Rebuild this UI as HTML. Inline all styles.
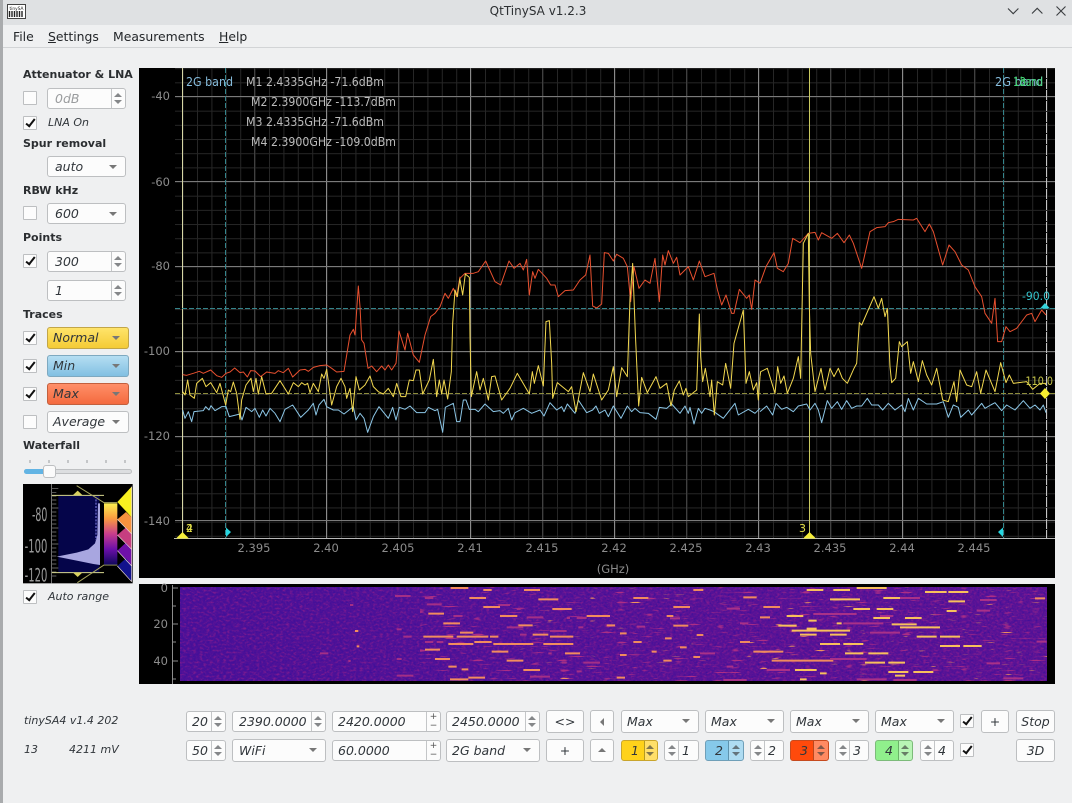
<!DOCTYPE html>
<html><head><meta charset="utf-8"><title>QtTinySA v1.2.3</title>
<style>
html,body{margin:0;padding:0;width:1072px;height:803px;overflow:hidden;background:#eff0f1;font-family:"DejaVu Sans",sans-serif;color:#232629}
.a{position:absolute;white-space:nowrap}
.b{position:absolute;white-space:nowrap;font-weight:bold;font-size:11px;left:23px;color:#2b2e31;line-height:14px}
.t{position:absolute;white-space:nowrap;font-style:italic;font-size:11px;line-height:14px;color:#31363b}
.w{position:absolute;box-sizing:border-box;background:#fcfcfc;border:1px solid #bdbfc1;border-radius:3px;font-style:italic;font-size:12.5px;color:#31363b;padding-left:7px;white-space:nowrap;height:21px;line-height:19px}
.c:after{content:"";position:absolute;right:8px;top:8px;border-left:4px solid transparent;border-right:4px solid transparent;border-top:4px solid #777}
.s{background:linear-gradient(#c4c6c8,#c4c6c8) right 13px top 0/1px 100% no-repeat,#fcfcfc}
.s:before{content:"";position:absolute;right:3px;top:4px;border-left:4px solid transparent;border-right:4px solid transparent;border-bottom:4px solid #858789}
.s:after{content:"";position:absolute;right:3px;bottom:4px;border-left:4px solid transparent;border-right:4px solid transparent;border-top:4px solid #858789}
.p{position:absolute;box-sizing:border-box;background:#fcfcfc;border:1px solid #bdbfc1;border-radius:3px;font-style:italic;font-size:12.5px;color:#31363b;text-align:center;height:23px;line-height:21px}
.k{position:absolute;box-sizing:border-box;width:14px;height:14px;background:#fcfcfc;border:1px solid #bdbfc1;border-radius:1px}
.k.on:after{content:"";position:absolute;left:4px;top:0px;width:3px;height:8px;border:solid #111;border-width:0 2px 2px 0;transform:rotate(38deg)}
.pm{background:linear-gradient(#c4c6c8,#c4c6c8) right 13px top 0/1px 100% no-repeat,#fcfcfc}
.pm b{position:absolute;right:2px;font:normal 9px/9px "DejaVu Sans",sans-serif;width:9px;text-align:center;color:#555}
.mk{background-position:left 13px top 0}
.mk:before,.mk:after{right:auto;left:3px}
.y{position:absolute;box-sizing:border-box;border-radius:3px;height:21px;top:740px;font-style:italic;font-size:12.5px;line-height:19px;padding-left:9px;color:#31363b}
.y:before{content:"";position:absolute;right:3px;top:4px;border-left:4px solid transparent;border-right:4px solid transparent;border-bottom:4px solid rgba(60,60,60,.65)}
.y:after{content:"";position:absolute;right:3px;bottom:4px;border-left:4px solid transparent;border-right:4px solid transparent;border-top:4px solid rgba(60,60,60,.65)}
svg{position:absolute;left:0;top:0}
text{font-family:"DejaVu Sans",sans-serif}
</style></head><body>
<div class="a" style="left:0;top:0;width:1072px;height:25px;background:#dfe1e3"></div>
<div class="a" style="left:0;top:25px;width:1072px;height:22px;background:#eff0f1;border-bottom:1px solid #d2d4d6"></div>
<div class="a" style="left:2px;top:0;width:1072px;height:25px;text-align:center;font-size:12px;line-height:22px;color:#2c2f32">QtTinySA v1.2.3</div>
<div class="a" style="left:13px;top:28px;font-size:12.4px;line-height:17px">File</div>
<div class="a" style="left:48px;top:28px;font-size:12.4px;line-height:17px"><u>S</u>ettings</div>
<div class="a" style="left:113px;top:28px;font-size:12.4px;line-height:17px">Measurements</div>
<div class="a" style="left:219px;top:28px;font-size:12.4px;line-height:17px"><u>H</u>elp</div>
<div class="a" style="left:0;top:0;width:3px;height:803px;background:#a9abad"></div>

<div class="a" style="left:139px;top:68px;width:916px;height:510px;background:#000"></div>
<div class="a" style="left:139px;top:584px;width:916px;height:100px;background:#000"></div>

<div class="b" style="top:68px">Attenuator &amp; LNA</div>
<div class="k" style="left:23px;top:91px"></div>
<div class="w s" style="left:47px;top:88px;width:79px;color:#9a9c9e">0dB</div>
<div class="k on" style="left:23px;top:116px"></div>
<div class="t" style="left:48px;top:116px">LNA On</div>
<div class="b" style="top:137px">Spur removal</div>
<div class="w c" style="left:47px;top:156px;width:79px">auto</div>
<div class="b" style="top:184px">RBW kHz</div>
<div class="k" style="left:23px;top:206px"></div>
<div class="w c" style="left:47px;top:203px;width:79px">600</div>
<div class="b" style="top:231px">Points</div>
<div class="k on" style="left:23px;top:254px"></div>
<div class="w s" style="left:47px;top:251px;width:79px">300</div>
<div class="w s" style="left:47px;top:280px;width:79px">1</div>
<div class="b" style="top:308px">Traces</div>
<div class="k on" style="left:23px;top:331px"></div>
<div class="w c" style="left:47px;top:327px;width:82px;height:22px;padding-left:5px;background:linear-gradient(#ffe46a,#f4cb36);border-color:#c2a648">Normal</div>
<div class="k on" style="left:23px;top:359px"></div>
<div class="w c" style="left:47px;top:355px;width:82px;height:22px;padding-left:5px;background:linear-gradient(#b5def2,#82c0e2);border-color:#7ea9c0">Min</div>
<div class="k on" style="left:23px;top:387px"></div>
<div class="w c" style="left:47px;top:383px;width:82px;height:22px;padding-left:5px;background:linear-gradient(#ff8f68,#f46a3f);border-color:#c2603e">Max</div>
<div class="k" style="left:23px;top:415px"></div>
<div class="w c" style="left:47px;top:411px;width:82px;height:22px;padding-left:5px">Average</div>
<div class="b" style="top:439px">Waterfall</div>
<div class="a" style="left:24px;top:469px;width:108px;height:5px;box-sizing:border-box;background:#dcdee0;border:1px solid #bdbfc1;border-radius:3px"></div>
<div class="a" style="left:24px;top:469px;width:22px;height:5px;background:#62b4e4;border-radius:3px 0 0 3px"></div>
<div class="a" style="left:43px;top:465px;width:13px;height:13px;box-sizing:border-box;background:#fbfbfb;border:1px solid #bdbfc1;border-radius:3px"></div>
<div class="k on" style="left:23px;top:590px"></div>
<div class="t" style="left:48px;top:590px">Auto range</div>

<div class="t" style="left:24px;top:714px">tinySA4 v1.4 202</div>
<div class="t" style="left:24px;top:743px">13</div>
<div class="t" style="left:69px;top:743px">4211 mV</div>

<div class="w s" style="left:186px;top:711px;width:40px;padding-left:5px">20</div>
<div class="w s" style="left:186px;top:740px;width:40px;padding-left:5px">50</div>
<div class="w s" style="left:232px;top:711px;width:94px;padding-left:6px">2390.0000</div>
<div class="w c" style="left:232px;top:739px;width:94px;height:23px;line-height:21px;padding-left:6px">WiFi</div>
<div class="w pm" style="left:332px;top:711px;width:109px;padding-left:5px">2420.0000<b style="top:1px">+</b><b style="top:10px">−</b></div>
<div class="w pm" style="left:332px;top:740px;width:109px;padding-left:5px">60.0000<b style="top:1px">+</b><b style="top:10px">−</b></div>
<div class="w s" style="left:446px;top:711px;width:94px;padding-left:5px">2450.0000</div>
<div class="w c" style="left:446px;top:739px;width:94px;height:23px;line-height:21px;padding-left:5px">2G band</div>

<div class="p" style="left:546px;top:710px;width:38px;font-style:normal">&lt;&gt;</div>
<div class="p" style="left:546px;top:739px;width:38px;font-style:normal">+</div>
<div class="p" style="left:590px;top:710px;width:24px"></div>
<div class="a" style="left:600px;top:718px;border-top:4px solid transparent;border-bottom:4px solid transparent;border-right:4px solid #777"></div>
<div class="p" style="left:590px;top:739px;width:24px"></div>
<div class="a" style="left:598px;top:748px;border-left:4px solid transparent;border-right:4px solid transparent;border-bottom:4px solid #777"></div>
<div class="w c" style="left:621px;top:710px;width:78px;height:23px;line-height:21px;padding-left:5px">Max</div>
<div class="w c" style="left:705px;top:710px;width:79px;height:23px;line-height:21px;padding-left:5px">Max</div>
<div class="w c" style="left:790px;top:710px;width:79px;height:23px;line-height:21px;padding-left:5px">Max</div>
<div class="w c" style="left:875px;top:710px;width:79px;height:23px;line-height:21px;padding-left:5px">Max</div>
<div class="k on" style="left:960px;top:714px"></div>
<div class="k on" style="left:960px;top:743px"></div>
<div class="p" style="left:981px;top:710px;width:28px;font-style:normal">+</div>
<div class="p" style="left:1016px;top:710px;width:39px">Stop</div>
<div class="p" style="left:1016px;top:739px;width:39px">3D</div>

<div class="y" style="left:621px;width:37px;background:linear-gradient(90deg,#ffd21a 0,#ffd21a 22px,#b59a20 22px,#b59a20 23px,#ffdf6a 23px);border:1px solid #c9a52c">1</div>
<div class="w s mk" style="left:664px;top:740px;width:35px;padding-left:17px">1</div>
<div class="y" style="left:705px;width:39px;background:linear-gradient(90deg,#86c9ea 0,#86c9ea 22px,#5e93ad 22px,#5e93ad 23px,#aedcf2 23px);border:1px solid #6f9fb8">2</div>
<div class="w s mk" style="left:750px;top:740px;width:34px;padding-left:17px">2</div>
<div class="y" style="left:790px;width:39px;background:linear-gradient(90deg,#ff4a0c 0,#ff4a0c 22px,#b8481f 22px,#b8481f 23px,#ff8a62 23px);border:1px solid #c64a1e">3</div>
<div class="w s mk" style="left:835px;top:740px;width:34px;padding-left:17px">3</div>
<div class="y" style="left:875px;width:38px;background:linear-gradient(90deg,#90f08c 0,#90f08c 22px,#6ab268 22px,#6ab268 23px,#b8f5b5 23px);border:1px solid #7cbb7a">4</div>
<div class="w s mk" style="left:920px;top:740px;width:34px;padding-left:17px">4</div>

<svg width="1072" height="803" viewBox="0 0 1072 803" style="pointer-events:none">
<defs>
<pattern id="gx" x="182.6" y="0" width="14.4" height="803" patternUnits="userSpaceOnUse"><rect width="1" height="803" fill="#262626"/></pattern>
<pattern id="gy" x="0" y="96.5" width="1072" height="14.17" patternUnits="userSpaceOnUse"><rect width="1072" height="1" fill="#262626"/></pattern>
<linearGradient id="cm" x1="0" y1="0" x2="0" y2="1"><stop offset="0" stop-color="#fcf050"/><stop offset=".25" stop-color="#f99a40"/><stop offset=".5" stop-color="#c83c8c"/><stop offset=".75" stop-color="#6a0fa8"/><stop offset="1" stop-color="#10085c"/></linearGradient>
<filter id="nz" x="0" y="0" width="100%" height="100%" color-interpolation-filters="sRGB"><feTurbulence type="fractalNoise" baseFrequency=".5 .5" numOctaves="2" seed="7"/><feColorMatrix values="0 0 0 0 .22  0 0 0 0 .06  0 0 0 0 .6  2 0 0 0 -.8"/></filter>
<filter id="nz2" x="0" y="0" width="100%" height="100%" color-interpolation-filters="sRGB"><feTurbulence type="fractalNoise" baseFrequency=".3 .5" numOctaves="2" seed="21"/><feColorMatrix values="0 0 0 0 .58  0 0 0 0 .12  0 0 0 0 .55  0 2 0 0 -.95"/></filter>
<filter id="nz3" x="0" y="0" width="100%" height="100%" color-interpolation-filters="sRGB"><feTurbulence type="fractalNoise" baseFrequency=".07 .5" numOctaves="1" seed="5"/><feColorMatrix values="0 0 0 0 .95  0 0 0 0 .58  0 0 0 0 .36  14 0 0 0 -10"/></filter>
<filter id="nz4" x="0" y="0" width="100%" height="100%" color-interpolation-filters="sRGB"><feTurbulence type="fractalNoise" baseFrequency=".07 .5" numOctaves="1" seed="13"/><feColorMatrix values="0 0 0 0 .68  0 0 0 0 .18  0 0 0 0 .52  10 0 0 0 -6.6"/></filter>
<linearGradient id="wf" x1="0" y1="0" x2="1" y2="0"><stop offset="0" stop-color="#4c1098"/><stop offset=".3" stop-color="#521298"/><stop offset=".6" stop-color="#5a1296"/><stop offset="1" stop-color="#5c1396"/></linearGradient>
<clipPath id="pc"><rect x="139" y="68" width="916" height="471"/></clipPath>
</defs>

<!-- title bar -->
<g>
<rect x="7.5" y="4.5" width="18" height="14" fill="#fff" stroke="#444"/>
<path d="M9.5 11v6M12 11v6M14.5 11v6M17 11v6M19.5 11v6M22 11v6" stroke="#222" stroke-width="1.4"/>
<text x="16.5" y="10" font-size="4.3" text-anchor="middle" fill="#222">tinySA</text>
<path d="M1008 8.5l5.2 5.2 5.2-5.2M1032 13.5l5.2-5.2 5.2 5.2M1056.5 6.5l9 9M1065.5 6.5l-9 9" fill="none" stroke="#3a3d40" stroke-width="1.1"/>
</g>

<!-- grid -->
<g clip-path="url(#pc)" shape-rendering="crispEdges">
<rect x="175" y="68" width="880" height="471" fill="url(#gy)"/>
<rect x="175" y="68" width="880" height="471" fill="url(#gx)"/>
<path d="M254.5 68V538M398.5 68V538M542.5 68V538M686.5 68V538M830.5 68V538M974.5 68V538" stroke="#404040"/>
<path d="M326.5 68V538M470.5 68V538M614.5 68V538M758.5 68V538M902.5 68V538" stroke="#8a8a8a"/>
<path d="M175 96.5H1055M175 181.5H1055M175 266.5H1055M175 351.5H1055M175 436.5H1055M175 520.5H1055" stroke="#7a7a7a"/>
<path d="M174 538.5H1055" stroke="#b8b8b8"/>
<path d="M182.5 68V538" stroke="#d6d6a4"/>
<path d="M1046.5 68V538" stroke="#c4c4c4" stroke-dasharray="10 1"/>
<path d="M809.5 68V538" stroke="#c9c960"/>
<path d="M225.5 68V538M1003.5 68V538" stroke="#34858c" stroke-dasharray="5 2"/>
<path d="M175 308.5H1055" stroke="#34858c" stroke-dasharray="5 2"/>
<path d="M175 393.5H1055" stroke="#8e8d3c" stroke-dasharray="5 2"/>
</g>

<!-- traces -->
<g fill="none" stroke-width="1" stroke-linejoin="round">
<g transform="translate(140,200) scale(.33333)">
<polyline vector-effect="non-scaling-stroke" stroke="#8cc6e6" points="128,630 135,655 145,635 155,665 162,635 190,632 197,620 207,630 213,617 225,632 245,620 258,620 268,650 300,642 306,660 318,622 335,635 345,625 358,652 368,630 378,648 390,625 405,640 420,665 435,628 458,615 482,652 505,630 520,610 528,645 537,615 552,598 560,620 580,630 595,630 612,642 640,620 648,660 660,640 672,655 683,697 700,650 717,620 745,655 758,622 768,660 778,622 795,628 810,618 830,638 855,638 865,622 885,632 893,628 908,697 916,622 940,610 950,665 960,665"/>
<polyline vector-effect="non-scaling-stroke" stroke="#e8502f" points="128,524 140,526 160,520 178,514 190,520 212,510 230,527 245,532 258,520 270,516 284,504 300,518 310,516 322,531 332,512 345,513 362,530 380,516 405,520 415,512 430,518 445,505 458,531 480,510 495,508 505,514 520,502 540,497 560,495 575,505 590,516 612,514 630,405 640,388 645,405 655,258 660,320 665,420 672,430 684,505 695,498 710,515 725,498 735,510 745,495 755,510 768,490 777,393 795,450 803,400 820,465 838,487 855,405 872,350 885,340 900,320 915,280 925,295 940,265 950,290 960,230"/>
<polyline vector-effect="non-scaling-stroke" stroke="#f2d850" points="128,575 135,585 143,540 150,585 163,595 170,550 187,535 198,560 212,548 230,578 240,550 257,615 265,570 272,575 280,546 290,580 300,658 305,600 318,555 333,535 340,575 348,535 355,582 365,530 378,582 395,580 420,542 445,582 460,548 475,560 485,548 495,555 503,550 510,578 520,550 535,575 545,522 552,535 560,508 575,615 590,560 603,535 615,560 620,595 630,565 638,635 648,530 658,570 675,555 690,528 700,560 715,575 730,582 745,565 760,590 770,550 783,590 797,590 808,540 820,542 828,510 838,510 848,582 868,540 880,478 890,590 898,540 905,582 912,540 923,597 934,515 938,370 945,270 952,290 960,235"/>
</g>
<g transform="translate(440,200) scale(.33333)">
<polyline vector-effect="non-scaling-stroke" stroke="#8cc6e6" points="60,665 70,600 78,600 88,628 105,628 115,635 135,612 160,635 180,632 190,640 205,625 215,660 225,638 250,625 275,640 300,630 312,648 330,608 350,630 365,620 372,635 382,612 405,640 415,600 440,638 458,630 468,618 478,640 495,630 505,650 520,618 543,655 562,618 575,635 585,625 600,638 625,640 648,658 658,622 680,625 695,612 720,640 735,618 745,640 750,622 762,672 775,625 785,640 795,625 810,630 822,635 850,655 885,610 895,645 925,628 945,640 960,625"/>
<polyline vector-effect="non-scaling-stroke" stroke="#e8502f" points="60,235 75,220 100,220 115,215 137,183 165,245 182,255 207,183 222,205 240,190 250,210 260,178 268,285 278,215 285,235 295,208 320,235 332,255 345,255 355,290 375,272 400,270 420,240 437,225 450,165 458,318 470,324 485,312 493,158 505,160 520,183 530,163 550,175 562,200 572,305 582,200 597,265 615,240 630,250 645,175 658,305 668,165 675,195 685,152 700,190 710,172 720,225 745,200 760,240 778,183 795,230 822,220 832,268 845,315 858,285 875,340 882,340 898,268 920,295 928,285 935,328 945,240 960,250"/>
<polyline vector-effect="non-scaling-stroke" stroke="#f2d850" points="60,240 68,285 76,222 88,232 90,410 94,590 110,515 120,570 130,535 145,600 155,530 165,528 185,600 210,565 232,520 268,582 277,515 283,550 295,497 310,558 318,365 328,362 335,490 338,595 352,548 385,575 395,560 408,635 430,518 450,575 460,522 485,600 505,570 520,500 530,590 545,503 562,530 570,300 578,190 586,400 596,618 605,532 622,578 648,530 660,565 680,550 693,618 703,570 718,543 730,585 738,565 745,590 770,570 778,342 782,470 788,545 796,505 810,590 815,540 823,645 832,545 848,555 857,490 872,565 882,430 910,330 918,550 928,515 940,570 950,548 955,600 960,530"/>
</g>
<g transform="translate(750,200) scale(.33333)">
<polyline vector-effect="non-scaling-stroke" stroke="#8cc6e6" points="30,635 50,618 68,645 78,610 95,628 110,622 130,635 145,618 170,612 180,630 195,610 205,630 215,668 232,602 245,625 262,605 275,628 290,602 305,625 320,618 335,618 352,595 365,615 385,615 398,630 415,610 435,630 455,615 465,635 475,595 490,630 505,595 530,612 560,612 580,605 595,652 610,615 625,622 632,652 655,630 665,645 695,610 705,625 722,615 735,608 755,632 770,615 795,630 820,602 840,625 855,615 870,630 880,615 888,638"/>
<polyline vector-effect="non-scaling-stroke" stroke="#e8502f" points="30,250 48,200 72,158 82,205 100,215 115,190 128,115 150,128 175,100 195,97 205,120 215,98 245,115 262,100 282,128 298,105 310,130 335,205 360,95 380,83 405,80 415,68 430,65 445,58 490,60 500,55 525,95 538,72 550,95 578,195 597,135 615,155 635,195 655,210 675,260 695,290 705,340 725,370 735,295 743,425 755,425 768,380 780,395 800,385 830,345 845,340 855,365 875,330 888,345"/>
<polyline vector-effect="non-scaling-stroke" stroke="#f2d850" points="30,530 32,515 52,505 75,580 83,500 92,550 102,528 112,580 130,535 145,470 152,535 160,130 175,100 178,320 182,460 195,575 213,505 225,570 240,505 252,530 265,505 277,535 292,550 312,505 320,490 328,368 335,375 372,290 385,325 395,295 405,350 412,325 420,500 425,548 437,535 448,425 455,440 472,425 482,520 490,485 505,545 517,482 530,525 545,555 560,505 578,600 595,605 612,545 620,605 630,510 650,555 665,560 680,515 692,580 708,510 735,575 752,488 768,548 778,525 790,550 830,545 848,568 870,550 888,550"/>
</g>
</g>

<!-- markers -->
<path d="M176 538.5l6.500-6.500 6.500 6.500zM803 538.500l6.500-6.500 6.500 6.500z" fill="#f5ee3a"/>
<path d="M226 527.500l5 4.500-5 5zM1003 527.500l-5 4.500 5 5z" fill="#26d6e0"/>
<path d="M1045 388l5 5.500-5 5.500-5-5.500z" fill="#f7ee30"/>
<path d="M1040 308.500l5-5.500 5 5.500z" fill="#35d4dc"/>

<!-- chart text -->
<g font-size="12" fill="#bcbcbc">
<text x="186" y="86" fill="#86bcdc" textLength="47" lengthAdjust="spacingAndGlyphs">2G band</text>
<text x="246" y="86" textLength="138" lengthAdjust="spacingAndGlyphs">M1 2.4335GHz -71.6dBm</text>
<text x="251" y="106" textLength="145" lengthAdjust="spacingAndGlyphs">M2 2.3900GHz -113.7dBm</text>
<text x="246" y="126" textLength="138" lengthAdjust="spacingAndGlyphs">M3 2.4335GHz -71.6dBm</text>
<text x="251" y="146" textLength="145" lengthAdjust="spacingAndGlyphs">M4 2.3900GHz -109.0dBm</text>
<text x="995" y="86" fill="#86bcdc" textLength="48" lengthAdjust="spacingAndGlyphs">2G band</text>
<text x="1013" y="86" fill="#44d672" textLength="13" lengthAdjust="spacingAndGlyphs">13</text>
<text x="1020" y="86" fill="#44d672" textLength="23" lengthAdjust="spacingAndGlyphs">band</text>
</g>
<g font-size="11.500" fill="#8c8c8c" text-anchor="end">
<text x="170" y="100">-40</text><text x="170" y="186">-60</text><text x="170" y="270">-80</text>
<text x="170" y="355">-100</text><text x="170" y="440">-120</text><text x="170" y="525">-140</text>
</g>
<g font-size="11.500" fill="#8c8c8c" text-anchor="middle">
<text x="254" y="552">2.395</text><text x="326" y="552">2.40</text><text x="398" y="552">2.405</text><text x="470" y="552">2.41</text><text x="542" y="552">2.415</text><text x="614" y="552">2.42</text><text x="686" y="552">2.425</text><text x="758" y="552">2.43</text><text x="830" y="552">2.435</text><text x="902" y="552">2.44</text><text x="974" y="552">2.445</text>
<text x="613" y="573">(GHz)</text>
</g>
<text x="186" y="532" font-size="11" fill="#e6e24a">4</text>
<text x="186" y="532" font-size="11" fill="#e6e24a">2</text>
<text x="799" y="532" font-size="11" fill="#e6e24a">3</text>
<text x="1022" y="300" font-size="11.500" fill="#35c4cc" textLength="28" lengthAdjust="spacingAndGlyphs">-90.0</text>
<text x="1022" y="385" font-size="11.500" fill="#c9c84a" textLength="31" lengthAdjust="spacingAndGlyphs">-110.0</text>

<!-- waterfall -->
<rect x="180" y="587" width="867" height="94" fill="url(#wf)"/>
<rect x="180" y="587" width="867" height="94" filter="url(#nz)"/>
<rect x="180" y="587" width="867" height="94" filter="url(#nz2)"/>
<rect x="420" y="587" width="627" height="94" filter="url(#nz4)"/>
<rect x="520" y="587" width="527" height="94" filter="url(#nz3)"/>
<path d="M172.500 585V684M172 588h6M172 606h4M172 624h6M172 642h4M172 661h6M172 679h4" stroke="#8c8c8c" fill="none"/>
<g font-size="11.500" fill="#8c8c8c" text-anchor="end"><text x="168" y="592">0</text><text x="168" y="628">20</text><text x="168" y="665">40</text></g>
<g stroke-width="2" fill="none">
<g transform="translate(140,510) scale(.33333)">
<path vector-effect="non-scaling-stroke" stroke="#f28c5e" d="M932 234H985M1030 240H1055M1152 240H1200M988 264H1038M1195 268H1255M1030 291H1080M1237 297H1295M865 311H912M1080 318H1132M910 340H960M1135 346H1178M960 368H1000M1178 374H1225M850 380H940M950 380H1045M1050 380H1075M1230 380H1300M925 402H1000M1003 396H1055M1060 402H1180M1210 402H1300M1055 425H1105M885 447H930M1100 452H1150M925 470H950M965 478H985M1150 480H1200M930 508H985M985 503H1035M855 419H900M1275 430H1320M1340 318H1380M645 363H655M650 409H658"/>
<path vector-effect="non-scaling-stroke" stroke="#a42f86" d="M765 258H812M855 264H880M860 283H905M1075 285H1110M1130 297H1142M1160 322H1210M940 318H968M1280 324H1290M1310 324H1340M1315 352H1330M1230 363H1280M1100 352H1150M770 358H785M790 380H815M855 396H880M890 396H910M1140 374H1160M1225 430H1235M1265 458H1280M1330 458H1380M770 447H785M540 430H565M1310 484H1325M1170 500H1230M770 497H820M625 453H632M630 285H640"/>
</g>
<g transform="translate(600,510) scale(.33333)">
<path vector-effect="non-scaling-stroke" stroke="#f8c05c" d="M620 240H670M700 240H750M770 234H860M975 246H1040M1045 246H1105M690 268H780M850 264H940M1045 274H1095M760 297H810M830 297H880M1040 303H1070M560 318H610M820 324H870M915 324H965M625 332H650M710 340H725M535 347H590M875 343H950M900 352H1020M575 362H750M620 356H650M600 374H650M690 374H740M950 380H1010M1020 380H1080M660 402H720M730 402H790M1020 408H1080M1090 408H1145M735 430H790M805 430H865M795 458H855M865 458H915M585 480H650M660 490H680M865 486H925M940 486H1000M885 497H915M600 508H620"/>
<path vector-effect="non-scaling-stroke" stroke="#f08a5e" d="M220 291H270M490 291H540M480 322H510M220 347H265M460 425H550M515 452H700M280 240H310M430 262H470M100 264H145M0 318H30M200 318H220M290 375H310M195 385H215M100 396H125M240 412H260M155 425H170M280 441H300M190 452H215M60 435H80M50 503H75M1305 265H1335M20 346H45M60 370H80M420 396H450"/>
<path vector-effect="non-scaling-stroke" stroke="#a93188" d="M770 508H860M1210 505H1270M380 296H420M640 312H770M840 318H880M1130 302H1170M730 340H850M810 368H900M420 340H445M300 430H345M690 447H800M380 470H400M500 480H570M210 325H240M110 350H135M880 510H950M1140 270H1190M1310 395H1340M1160 460H1200M370 510H440M900 264H960"/>
</g>
</g>

<!-- left waterfall panel -->
<g transform="translate(0,440) scale(.33333)">
<rect x="69" y="132" width="329" height="298" fill="#000"/>
<path d="M175 168H298V398H175z" fill="#05054a"/>
<path d="M170 350L230 338 265 328 285 310 292 285 294 190 300 190 300 375 280 372 230 362z" fill="#a8a6e0"/>
<path d="M288 178V300" stroke="#6868c8" stroke-width="4" stroke-dasharray="6 4" fill="none"/>
<path d="M155 132V430" stroke="#aaa" stroke-width="2" fill="none"/>
<path d="M155 145h20M155 157h14M155 168h14M155 180h14M155 192h14M155 204h20M155 216h14M155 228h14M155 240h14M155 252h14M155 264h20M155 276h14M155 288h14M155 300h14M155 312h20M155 324h14M155 336h14M155 348h14M155 360h14M155 372h14M155 384h20M155 396h14M155 408h14" stroke="#888" stroke-width="2" fill="none"/>
<path d="M155 166H312M155 398H312" stroke="#d8d890" stroke-width="3" fill="none"/>
<path d="M233 152l14 13H219zM233 411l14-13H219z" fill="#d8d060"/>
<path d="M230 137L312 188H352M232 428L312 375H352" stroke="#a9a760" stroke-width="3" fill="none"/>
<rect x="312" y="190" width="40" height="184" fill="url(#cm)"/>
<path d="M395 140L352 186 395 232z" fill="#f8f020"/>
<path d="M395 232L378 216 352 238 395 282z" fill="#f7923e"/>
<path d="M395 282L378 262 352 285 395 328z" fill="#c63e80"/>
<path d="M395 328L378 308 352 332 395 378z" fill="#6f10a8"/>
<path d="M395 378L378 355 352 378 395 425z" fill="#12128c"/>
<path d="M352 238L395 282M352 285L395 328M352 332L395 378M352 378L395 425M395 140V425" stroke="#e8d8d0" stroke-width="2" fill="none"/>
<g fill="#9a9a9a" font-size="56" text-anchor="end">
<text x="142" y="243" textLength="46" lengthAdjust="spacingAndGlyphs">-80</text>
<text x="142" y="338" textLength="68" lengthAdjust="spacingAndGlyphs">-100</text>
<text x="142" y="425" textLength="68" lengthAdjust="spacingAndGlyphs">-120</text>
</g>
</g>
<path d="M30 460v3M49 460v3M68 460v3M87 460v3M106 460v3M125 460v3" stroke="#9a9c9e" fill="none"/>
</svg>
</body></html>
